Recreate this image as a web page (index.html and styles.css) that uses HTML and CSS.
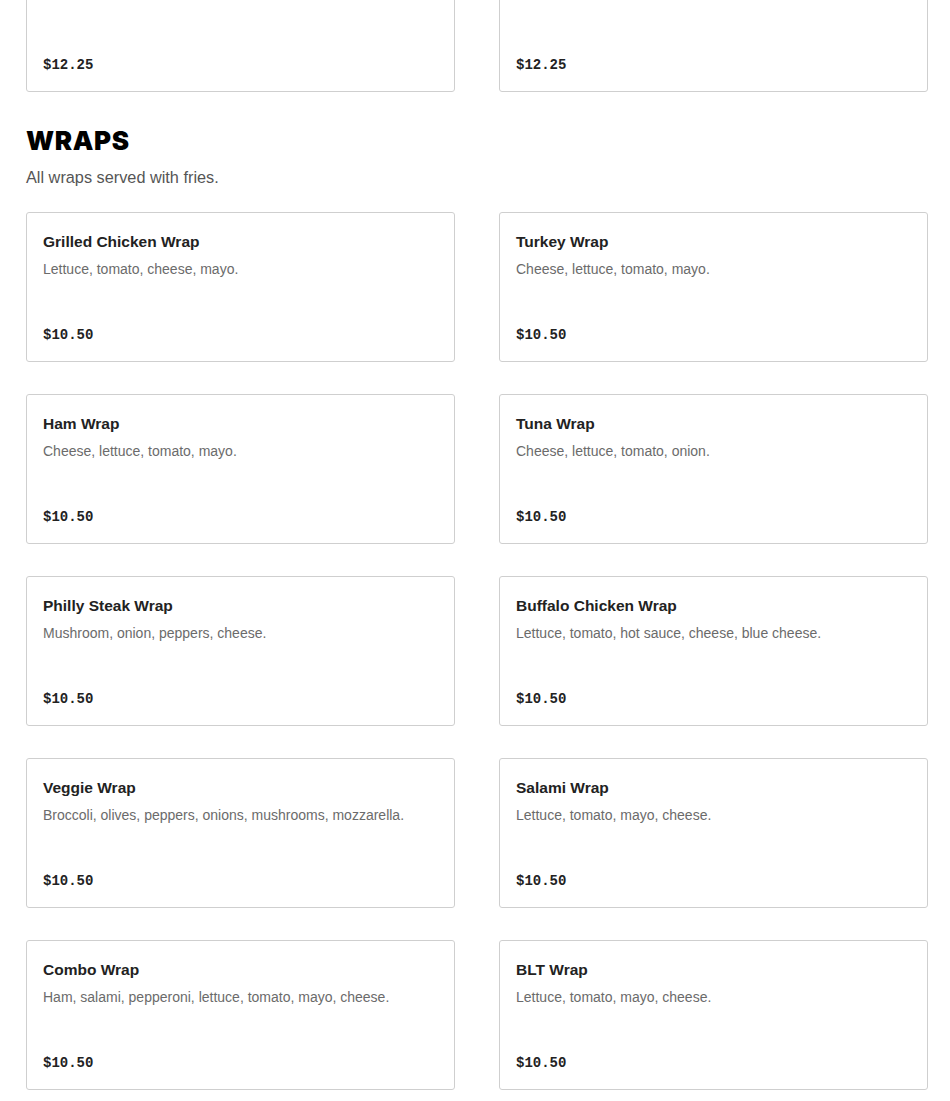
FILE: index.html
```html
<!DOCTYPE html>
<html>
<head>
<meta charset="utf-8">
<link rel="stylesheet" href="styles.css">
</head>
<body>
<main class="menu">
  <section class="section prev">
    <div class="grid">
      <div class="card"><div class="price">$12.25</div></div>
      <div class="card"><div class="price">$12.25</div></div>
    </div>
  </section>
  <section class="section">
    <h2 class="section-title">WRAPS</h2>
    <p class="section-note">All wraps served with fries.</p>
    <div class="grid">
      <div class="card"><h3 class="name">Grilled Chicken Wrap</h3><p class="desc">Lettuce, tomato, cheese, mayo.</p><div class="price">$10.50</div></div>
      <div class="card"><h3 class="name">Turkey Wrap</h3><p class="desc">Cheese, lettuce, tomato, mayo.</p><div class="price">$10.50</div></div>
      <div class="card"><h3 class="name">Ham Wrap</h3><p class="desc">Cheese, lettuce, tomato, mayo.</p><div class="price">$10.50</div></div>
      <div class="card"><h3 class="name">Tuna Wrap</h3><p class="desc">Cheese, lettuce, tomato, onion.</p><div class="price">$10.50</div></div>
      <div class="card"><h3 class="name">Philly Steak Wrap</h3><p class="desc">Mushroom, onion, peppers, cheese.</p><div class="price">$10.50</div></div>
      <div class="card"><h3 class="name">Buffalo Chicken Wrap</h3><p class="desc">Lettuce, tomato, hot sauce, cheese, blue cheese.</p><div class="price">$10.50</div></div>
      <div class="card"><h3 class="name">Veggie Wrap</h3><p class="desc">Broccoli, olives, peppers, onions, mushrooms, mozzarella.</p><div class="price">$10.50</div></div>
      <div class="card"><h3 class="name">Salami Wrap</h3><p class="desc">Lettuce, tomato, mayo, cheese.</p><div class="price">$10.50</div></div>
      <div class="card"><h3 class="name">Combo Wrap</h3><p class="desc">Ham, salami, pepperoni, lettuce, tomato, mayo, cheese.</p><div class="price">$10.50</div></div>
      <div class="card"><h3 class="name">BLT Wrap</h3><p class="desc">Lettuce, tomato, mayo, cheese.</p><div class="price">$10.50</div></div>
    </div>
  </section>
</main>
</body>
</html>
```
FILE: styles.css
```css
html, body {
  margin: 0;
  padding: 0;
  background: #fff;
}
body {
  font-family: "Liberation Sans", Arial, sans-serif;
  color: #222;
}
.menu {
  width: 902px;
  padding-left: 26px;
}
.prev {
  margin-top: -58px;
}
.grid {
  display: grid;
  grid-template-columns: 1fr 1fr;
  column-gap: 44px;
  row-gap: 32px;
}
.card {
  box-sizing: border-box;
  height: 150px;
  border: 1px solid #cfcfcf;
  border-radius: 3px;
  padding: 18px 16px 15px;
  display: flex;
  flex-direction: column;
}
.section-title {
  margin: 33px 0 0;
  font-family: Inter, "Liberation Sans", sans-serif;
  font-weight: 900;
  font-size: 26px;
  line-height: 32px;
  color: #000;
  letter-spacing: 0.6px;
}
.section-note {
  margin: 9px 0 24px;
  font-size: 16.3px;
  line-height: 22px;
  color: #555;
}
.name {
  margin: 0;
  font-size: 15.5px;
  line-height: 22px;
  font-weight: 700;
  color: #222;
}
.desc {
  margin: 6px 0 0;
  font-size: 14px;
  line-height: 20px;
  color: #6b6b6b;
}
.price {
  margin-top: auto;
  font-family: "Liberation Mono", monospace;
  font-weight: 700;
  font-size: 14px;
  line-height: 22px;
  color: #222;
}
```
